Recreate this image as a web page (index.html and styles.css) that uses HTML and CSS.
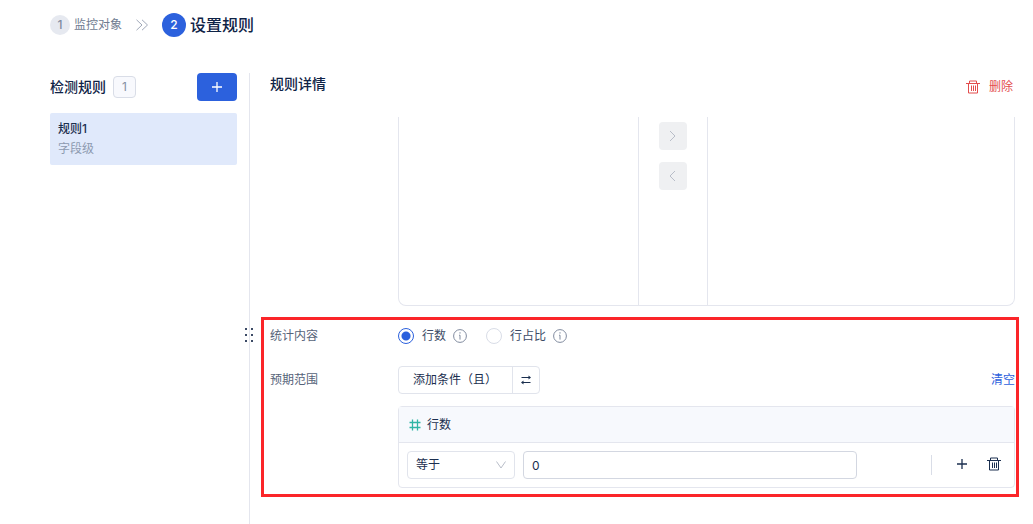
FILE: index.html
```
<!DOCTYPE html>
<html lang="zh-CN">
<head>
    <meta charset="UTF-8">
    <meta name="viewport" content="width=device-width, initial-scale=1.0">
    <title>设置规则</title>
    <link rel="stylesheet" href="styles.css">
</head>
<body>

<svg class="symbols" aria-hidden="true">
    <symbol id="icon-trash" viewBox="0 0 14 14">
        <path d="M0 3.5h14M3.5 3V1h7v2M2.5 4v9h9V4M5.5 5.5v5.500M7.500 5.500v5.500M9.500 5.500v5.500"/>
    </symbol>
    <symbol id="icon-info" viewBox="0 0 14 14">
        <circle cx="7" cy="7" r="6.4"/>
        <path d="M7 3.2v1.4M6 6.2h1v4.4"/>
    </symbol>
    <symbol id="icon-plus" viewBox="0 0 14 14">
        <path d="M7 2v10M2 7h10"/>
    </symbol>
</svg>

<header class="steps">
    <span class="step-number">1</span>
    <span class="step-name">监控对象</span>
    <svg class="step-arrow" width="12" height="12" viewBox="0 0 12 12"><path d="M.5 .8 6 6 .5 11.2M6 .8 11.5 6 6 11.2"/></svg>
    <span class="step-number active">2</span>
    <h1>设置规则</h1>
</header>

<div class="workspace">
    <aside class="sidebar">
        <div class="sidebar-header">
            <h2>检测规则</h2>
            <span class="count">1</span>
            <button class="add-rule" type="button" aria-label="添加规则"><svg class="icon plus" width="14" height="14"><use href="#icon-plus"/></svg></button>
        </div>
        <div class="rule-item">
            <strong>规则1</strong>
            <span>字段级</span>
        </div>
        <svg class="drag-handle" width="8" height="14" viewBox="0 0 8 14"><path d="M0 0h2v2H0zM6 0h2v2H6zM0 6h2v2H0zM6 6h2v2H6zM0 12h2v2H0zM6 12h2v2H6z"/></svg>
    </aside>

    <main class="detail">
        <div class="detail-header">
            <h2>规则详情</h2>
            <button class="delete" type="button"><svg class="icon" width="14" height="14"><use href="#icon-trash"/></svg>删除</button>
        </div>

        <div class="transfer">
            <div class="transfer-source"></div>
            <div class="transfer-actions">
                <button type="button" aria-label="右移" disabled><svg class="icon" width="12" height="12" viewBox="0 0 12 12"><path d="M3 1 8 6 3 11"/></svg></button>
                <button type="button" aria-label="左移" disabled><svg class="icon" width="12" height="12" viewBox="0 0 12 12"><path d="M8 1 3 6 8 11"/></svg></button>
            </div>
            <div class="transfer-target"></div>
        </div>

        <section class="highlight">
            <div class="form-row">
                <span class="form-label" id="statLabel">统计内容</span>
                <div class="radios" role="radiogroup" aria-labelledby="statLabel">
                    <label><input type="radio" name="stat" checked>行数</label>
                    <svg class="icon info" width="14" height="14"><use href="#icon-info"/></svg>
                    <label><input type="radio" name="stat">行占比</label>
                    <svg class="icon info" width="14" height="14"><use href="#icon-info"/></svg>
                </div>
            </div>

            <div class="form-row">
                <span class="form-label">预期范围</span>
                <div class="toolbar">
                    <div class="button-group">
                        <button type="button">添加条件（且）</button>
                        <button class="swap" type="button" aria-label="切换且或"><svg class="icon" width="12" height="12" viewBox="0 0 12 12"><path d="M1.500 3.500H10M2 8.500h8.500"/><path class="solid" d="M8.500 1.500l2.500 2L8.500 5.500zM3.500 6.500 1 8.500l2.500 2z"/></svg></button>
                    </div>
                    <button class="clear" type="button">清空</button>
                </div>
            </div>

            <div class="condition">
                <div class="condition-header">
                    <svg class="icon hash" width="12" height="12" viewBox="0 0 12 12"><path d="M3.500 .5v11M8.500 .5v11M.5 3.500h11M.5 8.500h11"/></svg>
                    行数
                </div>
                <div class="condition-body">
                    <div class="select">
                        <select aria-label="比较方式"><option>等于</option></select>
                        <svg class="icon" width="10" height="8" viewBox="0 0 10 8"><path d="M.5 .5 5 7 9.500 .5"/></svg>
                    </div>
                    <input class="value" type="text" value="0" aria-label="行数">
                    <div class="condition-actions">
                        <button type="button" aria-label="添加"><svg class="icon plus" width="14" height="14"><use href="#icon-plus"/></svg></button>
                        <button type="button" aria-label="删除条件"><svg class="icon" width="14" height="14"><use href="#icon-trash"/></svg></button>
                    </div>
                </div>
            </div>
        </section>
    </main>
</div>

</body>
</html>
```
FILE: styles.css
```
* {
    box-sizing: border-box;
}
body {
    display: flex;
    flex-direction: column;
    min-height: 100vh;
    margin: 0;
    background-color: #fff;
    color: #1b2f4f;
    font: 12px/20px Inter, "Noto Sans CJK SC", sans-serif;
}
button, input, select {
    font: inherit;
    color: inherit;
}
button {
    display: inline-flex;
    align-items: center;
    justify-content: center;
    padding: 0;
    border: 0;
    background: none;
}
h1, h2 {
    margin: 0;
    color: #0f2346;
    font-weight: 500;
}
h1 {
    font-size: 16px;
    line-height: 24px;
}
h2 {
    font-size: 14px;
    line-height: 22px;
}
.symbols {
    display: none;
}
.icon, .step-arrow {
    flex: none;
    fill: none;
    stroke: currentColor;
}
.plus, .hash {
    stroke-width: 1.3;
}

/* steps */
.steps {
    display: flex;
    align-items: center;
    gap: 4px;
    padding: 13px 50px 0;
}
.step-number {
    width: 20px;
    border-radius: 50%;
    background-color: #e6e9f0;
    color: #808b9f;
    font-weight: 500;
    text-align: center;
}
.step-number.active {
    width: 24px;
    background-color: #2c61dd;
    color: #fff;
    line-height: 24px;
}
.step-name {
    color: #6f7b90;
}
.step-arrow {
    margin: 0 10px;
    color: #a0a8b8;
}

/* sidebar */
.workspace {
    display: flex;
    flex: 1;
    margin-top: 36px;
    padding: 0 18px 0 50px;
}
.sidebar {
    position: relative;
    flex: none;
    width: 200px;
    padding-right: 12px;
    border-right: 1px solid #e4e6ee;
}
.sidebar-header {
    display: flex;
    align-items: center;
    gap: 7px;
    margin-bottom: 12px;
}
.count {
    width: 23px;
    border: 1px solid #d9dde7;
    border-radius: 4px;
    background-color: #f8f9fd;
    color: #8490a3;
    text-align: center;
}
.add-rule {
    width: 40px;
    height: 28px;
    margin-left: auto;
    border-radius: 4px;
    background-color: #2c61dd;
    color: #fff;
}
.rule-item {
    padding: 6px 8px;
    border-radius: 2px;
    background-color: #e0e9fb;
}
.rule-item strong, .rule-item span {
    display: block;
    font-weight: 500;
}
.rule-item span {
    color: #8d9ab0;
    font-weight: 400;
}
.drag-handle {
    position: absolute;
    top: 255px;
    right: -4px;
    fill: #3c4b66;
}

/* detail */
.detail {
    flex: 1;
    padding-left: 20px;
}
.detail-header {
    display: flex;
    align-items: flex-start;
    justify-content: space-between;
    height: 44px;
}
.delete {
    gap: 9px;
    height: 28px;
    padding-right: 2px;
    color: #e34d4d;
}
.transfer {
    display: flex;
    height: 189px;
    margin-left: 128px;
    border: 1px solid #e4e6ee;
    border-top: 0;
    border-radius: 0 0 8px 8px;
}
.transfer-source {
    width: 240px;
    border-right: 1px solid #e4e6ee;
}
.transfer-actions {
    display: flex;
    flex-direction: column;
    gap: 12px;
    padding: 5px 20px;
}
.transfer-actions button {
    width: 28px;
    height: 28px;
    border-radius: 4px;
    background-color: #eff0f2;
    color: #b8bdc8;
}
.transfer-target {
    flex: 1;
    border-left: 1px solid #e4e6ee;
}

/* form */
.highlight {
    margin: 11px -4px 0 -9px;
    padding: 0 1px 6px 6px;
    border: 3px solid #fb2529;
}
.form-row {
    display: flex;
    align-items: center;
    height: 32px;
    margin-bottom: 12px;
}
.form-label {
    width: 128px;
    color: #566379;
}
.radios {
    display: flex;
    align-items: center;
    color: #3c4b66;
}
.radios label {
    display: flex;
    align-items: center;
    gap: 8px;
}
.radios input {
    appearance: none;
    width: 16px;
    height: 16px;
    margin: 0;
    border: 1px solid #d9dde7;
    border-radius: 50%;
}
.radios input:checked {
    border-color: #2c61dd;
    background: radial-gradient(circle, #2c61dd 4px, #fff 5px);
}
.info {
    margin: 0 19px 0 7px;
    color: #808b9f;
}
.toolbar {
    display: flex;
    flex: 1;
    justify-content: space-between;
}
.button-group {
    display: flex;
    border: 1px solid #e1e4ec;
    border-radius: 4px;
}
.button-group button {
    height: 26px;
    padding: 0 15px 0 14px;
}
.button-group .swap {
    width: 27px;
    padding: 0;
    border-left: 1px solid #e1e4ec;
}
.solid {
    fill: currentColor;
    stroke: none;
}
.clear {
    color: #2c61dd;
}
.condition {
    margin: -2px 0 0 128px;
    border: 1px solid #e4e6ee;
    border-radius: 4px;
}
.condition-header {
    display: flex;
    align-items: center;
    gap: 6px;
    height: 36px;
    padding: 0 10px;
    border-bottom: 1px solid #e4e6ee;
    background-color: #f7f9fd;
}
.hash {
    color: #2fb5a5;
}
.condition-body {
    display: flex;
    align-items: center;
    gap: 8px;
    padding: 8px;
}
.select {
    position: relative;
    flex: none;
    width: 108px;
}
.select select {
    appearance: none;
    width: 100%;
    height: 28px;
    padding: 0 8px;
    border: 1px solid #e1e4ec;
    border-radius: 4px;
    background-color: #fff;
}
.select .icon {
    position: absolute;
    top: 10px;
    right: 9px;
    color: #b8bdc8;
    pointer-events: none;
}
.value {
    flex: 1;
    min-width: 0;
    max-width: 334px;
    height: 28px;
    padding: 0 8px;
    border: 1px solid #d3d7e1;
    border-radius: 4px;
}
.condition-actions {
    display: flex;
    gap: 18px;
    margin-left: auto;
    padding: 2px 5px 4px 23px;
    border-left: 1px solid #d9dde7;
}
```
